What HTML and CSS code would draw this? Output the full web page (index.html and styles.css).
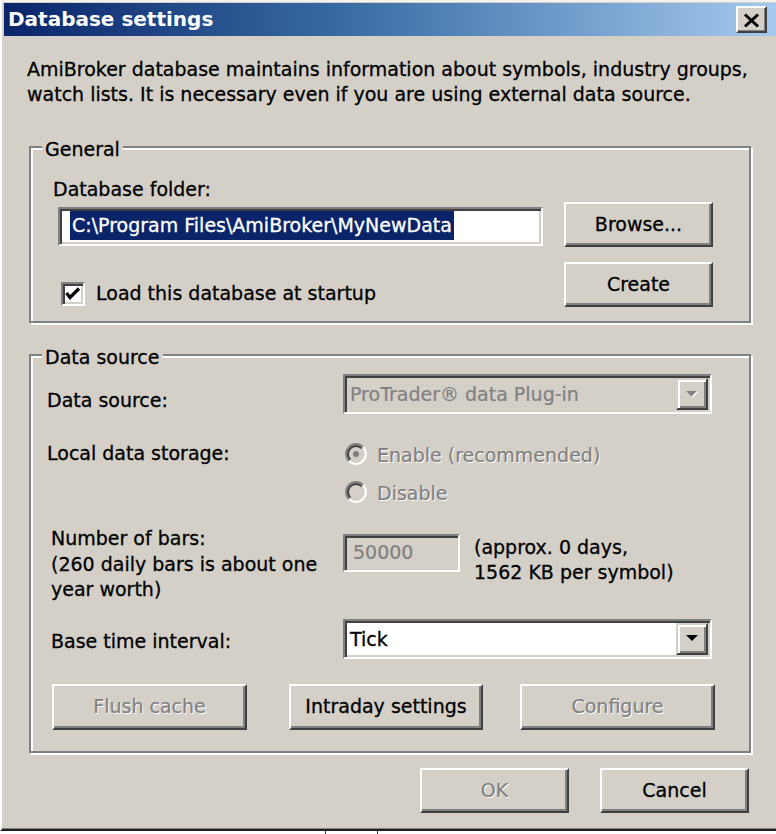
FILE: index.html
```html
<!DOCTYPE html>
<html>
<head>
<meta charset="utf-8">
<title>Database settings</title>
<link rel="stylesheet" href="styles.css">
</head>
<body>
<div class="window">
  <div class="titlebar">
    <span class="title">Database settings</span>
    <span class="close-btn">
      <svg width="17" height="15" viewBox="0 0 17 15"><path d="M2 1.5 L15 13.5 M15 1.5 L2 13.5" stroke="#000" stroke-width="3" fill="none"/></svg>
    </span>
  </div>

  <p class="intro">AmiBroker database maintains information about symbols, industry groups, watch lists. It is necessary even if you are using external data source.</p>

  <fieldset class="group general">
    <legend>General</legend>
    <div class="gen-row">
      <div class="gen-left">
        <div class="lbl">Database folder:</div>
        <div class="textbox folder"><span class="sel">C:\Program Files\AmiBroker\MyNewData</span></div>
        <div class="check-row">
          <span class="checkbox"><svg width="16" height="16" viewBox="0 0 16 16"><path d="M1.5 7 L5 11.5 L14 2.5" stroke="#000" stroke-width="3.2" fill="none"/></svg></span>
          <span>Load this database at startup</span>
        </div>
      </div>
      <div class="gen-right">
        <span class="btn">Browse...</span>
        <span class="btn">Create</span>
      </div>
    </div>
  </fieldset>

  <fieldset class="group source">
    <legend>Data source</legend>
    <div class="source-body">
      <div class="row row-source">
        <div class="lbl">Data source:</div>
        <div class="combo disabled">
          <span class="combo-text">ProTrader® data Plug-in</span>
          <span class="combo-btn"><svg width="12" height="7" viewBox="0 0 12 7"><path d="M0 0 H12 L6 6 Z" fill="#808080"/><path d="M6 6 L12 0" stroke="#fff" stroke-width="1.4"/></svg></span>
        </div>
      </div>
      <div class="row row-storage">
        <div class="lbl">Local data storage:</div>
        <div class="radios">
          <div class="radio-row">
            <svg class="radio" width="22" height="22" viewBox="0 0 22 22">
              <circle cx="11" cy="11" r="10" fill="#d4d0c8"/>
              <path d="M3.93 18.07 A10 10 0 0 1 18.07 3.93" stroke="#808080" stroke-width="2" fill="none"/>
              <path d="M18.07 3.93 A10 10 0 0 1 3.93 18.07" stroke="#fff" stroke-width="2" fill="none"/>
              <path d="M5.34 16.66 A8 8 0 0 1 16.66 5.34" stroke="#404040" stroke-width="2" fill="none"/>
              <circle cx="11" cy="11" r="3" fill="#808080"/>
            </svg>
            <span class="dis">Enable (recommended)</span>
          </div>
          <div class="radio-row">
            <svg class="radio" width="22" height="22" viewBox="0 0 22 22">
              <circle cx="11" cy="11" r="10" fill="#d4d0c8"/>
              <path d="M3.93 18.07 A10 10 0 0 1 18.07 3.93" stroke="#808080" stroke-width="2" fill="none"/>
              <path d="M18.07 3.93 A10 10 0 0 1 3.93 18.07" stroke="#fff" stroke-width="2" fill="none"/>
              <path d="M5.34 16.66 A8 8 0 0 1 16.66 5.34" stroke="#404040" stroke-width="2" fill="none"/>
            </svg>
            <span class="dis">Disable</span>
          </div>
        </div>
      </div>
      <div class="row row-bars">
        <div class="lbl bars-lbl">Number of bars:<br>(260 daily bars is about one<br>year worth)</div>
        <div class="bars-ctl">
          <div class="textbox numbox">50000</div>
          <div class="approx">(approx. 0 days,<br>1562 KB per symbol)</div>
        </div>
      </div>
      <div class="row row-interval">
        <div class="lbl interval-lbl">Base time interval:</div>
        <div class="combo">
          <span class="combo-text">Tick</span>
          <span class="combo-btn"><svg width="12" height="7" viewBox="0 0 12 7"><path d="M0 0 H12 L6 6 Z" fill="#000"/></svg></span>
        </div>
      </div>
      <div class="btn-row">
        <span class="btn wide dis">Flush cache</span>
        <span class="btn wide intraday">Intraday settings</span>
        <span class="btn wide configure dis">Configure</span>
      </div>
    </div>
  </fieldset>

  <div class="footer">
    <span class="btn dis">OK</span>
    <span class="btn">Cancel</span>
  </div>
</div>
<div class="taskbar-bit"></div>
</body>
</html>
```

FILE: styles.css
```css
html, body {
  margin: 0;
  padding: 0;
}
body {
  background: #fff;
  width: 776px;
  height: 834px;
  overflow: hidden;
  font-family: "DejaVu Sans", sans-serif;
  font-size: 19px;
  line-height: 25px;
  color: #000;
  -webkit-text-stroke: 0.3px currentColor;
}
.window {
  box-sizing: border-box;
  width: 784px;
  height: 831px;
  background: #d4d0c8;
  border-style: solid;
  border-width: 2px;
  border-color: #f4f2ee #404040 #202020 #ffffff;
  box-shadow: inset 0 -1px 0 #808080;
  padding: 1px 2px 0 2px;
}
.titlebar {
  height: 33px;
  display: flex;
  align-items: center;
  background: linear-gradient(to right, #0a246a 0%, #3a6ea5 45%, #a6caf0 100%);
}
.title {
  color: #fff;
  font-weight: bold;
  font-size: 20px;
  padding-left: 4px;
  -webkit-text-stroke: 0;
}
.close-btn {
  margin-left: auto;
  margin-right: 13px;
  box-sizing: border-box;
  width: 31px;
  height: 27px;
  display: flex;
  align-items: center;
  justify-content: center;
  background: #d4d0c8;
  border: 2px solid;
  border-color: #fff #404040 #404040 #fff;
  box-shadow: inset -1px -1px 0 #808080;
  padding-top: 1px;
}
.intro {
  margin: 21px 0 0 23px;
}
.group {
  margin: 0 0 0 25px;
  width: 722px;
  box-sizing: border-box;
  border: 2px solid #808080;
  box-shadow: inset 2px 2px 0 #fff, 2px 2px 0 #fff;
  min-inline-size: 0;
}
.group legend {
  background: #d4d0c8;
  line-height: 20px;
  padding: 4px 3px 0 3px;
  margin-left: 11px;
}
.general {
  margin-top: 28px;
  padding: 18px 0 14px 0;
}
.gen-row {
  display: flex;
  padding-left: 22px;
}
.gen-left {
  width: 490px;
}
.textbox {
  box-sizing: border-box;
  border: 2px solid;
  border-color: #808080 #fff #fff #808080;
  box-shadow: inset 2px 2px 0 #404040, inset -2px -2px 0 #d4d0c8;
}
.folder {
  margin: 5px 0 0 5px;
  width: 485px;
  height: 39px;
  background: #fff;
  padding: 2px 0 0 10px;
  line-height: 29px;
}
.sel {
  display: inline-block;
  background: #0a246a;
  color: #fff;
  padding: 0 2px;
}
.check-row {
  display: flex;
  align-items: center;
  margin: 35px 0 0 8px;
  gap: 11px;
}
.checkbox {
  box-sizing: border-box;
  width: 24px;
  height: 24px;
  background: #fff;
  border: 2px solid;
  border-color: #808080 #fff #fff #808080;
  box-shadow: inset 2px 2px 0 #404040, inset -2px -2px 0 #d4d0c8;
  padding: 2px 0 0 2px;
  display: flex;
}
.gen-right {
  margin: 25px 0 0 21px;
  display: flex;
  flex-direction: column;
  gap: 15px;
}
.btn {
  box-sizing: border-box;
  width: 149px;
  height: 45px;
  display: flex;
  align-items: center;
  justify-content: center;
  background: #d4d0c8;
  border: 2px solid;
  border-color: #fff #404040 #404040 #fff;
  box-shadow: inset -2px -2px 0 #808080;
}
.dis {
  color: #808080;
  text-shadow: 1px 1px 0 #fff;
  -webkit-text-stroke: 0.2px currentColor;
}
.source {
  margin-top: 20px;
  padding: 7px 0 21px 0;
}
.source-body {
  padding-left: 16px;
}
.row {
  display: grid;
  grid-template-columns: 296px auto;
  align-items: start;
}
.row-source .lbl {
  margin-top: 14px;
}
.combo {
  box-sizing: border-box;
  width: 369px;
  height: 40px;
  display: flex;
  align-items: stretch;
  background: #fff;
  border: 2px solid;
  border-color: #808080 #fff #fff #808080;
  box-shadow: inset 2px 2px 0 #404040, inset -2px -2px 0 #d4d0c8;
  padding: 2px;
}
.combo.disabled {
  background: #d4d0c8;
}
.combo.disabled .combo-text {
  color: #808080;
  -webkit-text-stroke: 0.2px currentColor;
}
.combo-text {
  flex: 1;
  padding-left: 3px;
  line-height: 32px;
}
.combo-btn {
  box-sizing: border-box;
  width: 32px;
  display: flex;
  align-items: center;
  justify-content: center;
  background: #d4d0c8;
  border: 2px solid;
  border-color: #d4d0c8 #404040 #404040 #d4d0c8;
  box-shadow: inset 2px 2px 0 #fff, inset -2px -2px 0 #808080;
}
.row-storage {
  margin-top: 27px;
}
.radios {
  display: flex;
  flex-direction: column;
  gap: 12px;
}
.radio-row {
  display: flex;
  align-items: center;
  height: 26px;
  gap: 10px;
  padding-left: 2px;
}
.radio-row .dis {
  margin-top: 3px;
}
.row-bars {
  margin-top: 19px;
}
.bars-lbl {
  margin: 2px 0 0 4px;
  line-height: 25.5px;
}
.bars-ctl {
  display: flex;
  gap: 14px;
  margin-top: 10px;
}
.numbox {
  width: 117px;
  height: 38px;
  background: #d4d0c8;
  color: #808080;
  padding-left: 8px;
  line-height: 33px;
  -webkit-text-stroke: 0.2px currentColor;
}
.approx {
  margin-top: 1px;
}
.row-interval {
  margin-top: 16px;
}
.interval-lbl {
  margin: 10px 0 0 4px;
}
.btn-row {
  display: flex;
  margin: 25px 0 0 5px;
  height: 46px;
}
.btn.wide {
  width: 195px;
  height: 46px;
}
.btn.intraday {
  margin-left: 42px;
  width: 194px;
}
.configure {
  margin-left: 37px;
}
.footer {
  display: flex;
  gap: 31px;
  margin: 15px 0 0 416px;
}
.footer .btn {
  height: 45px;
}
.taskbar-bit {
  margin-left: 325px;
  width: 51px;
  height: 3px;
  border-left: 1px solid #333;
  border-right: 1px solid #333;
}
```
